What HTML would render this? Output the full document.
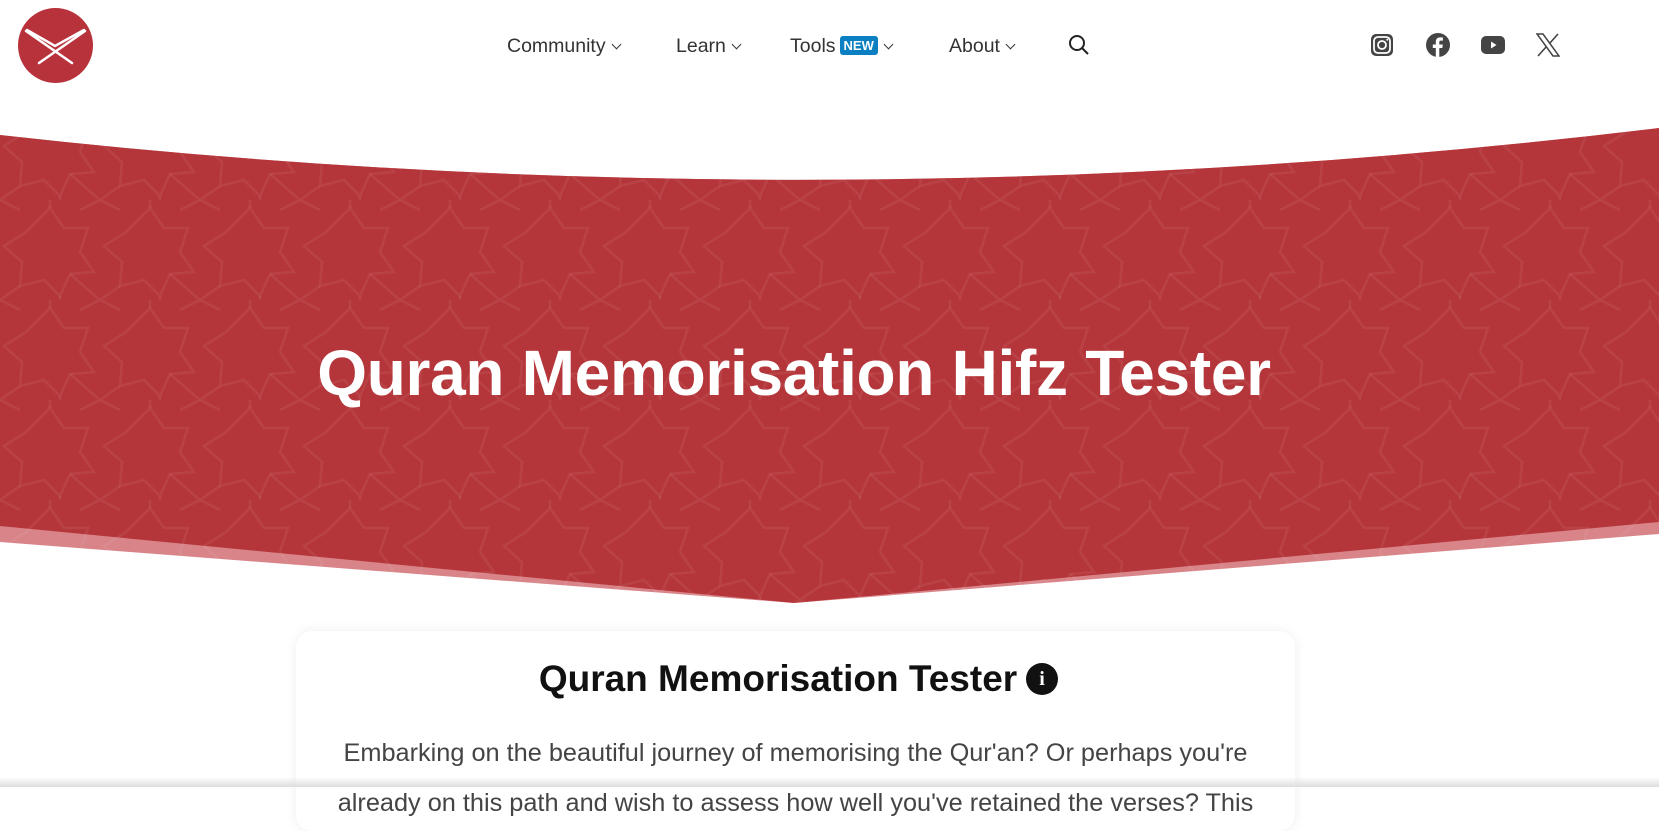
<!DOCTYPE html>
<html><head><meta charset="utf-8"><style>
*{margin:0;padding:0;box-sizing:border-box}
body{width:1659px;height:787px;overflow:hidden;background:#fff;font-family:"Liberation Sans",sans-serif;position:relative}
.nav a{position:absolute;top:35px;font-size:19.5px;color:#333;text-decoration:none}
.chev{display:inline-block;width:7px;height:7px;border-right:1.6px solid #333;border-bottom:1.6px solid #333;transform:rotate(45deg);margin-left:7px;position:relative;top:-4px}
.new{background:#0a7fc2;color:#fff;font-size:13px;font-weight:bold;padding:2px 4px;border-radius:3px;position:relative;top:-2px;margin-left:4px}
h1{position:absolute;top:336px;left:0;width:1588px;text-align:center;color:#fff;font-size:64px;font-weight:900;letter-spacing:-0.3px}
.card{position:absolute;left:296px;top:631px;width:999px;height:200px;background:#fff;border-radius:16px;box-shadow:0 0 12px rgba(0,0,0,.07)}
h2{position:absolute;top:658px;left:0;width:1556px;text-align:center;font-size:37px;font-weight:bold;color:#111}
.info{position:absolute;left:1026px;top:663px;width:32px;height:32px;border-radius:50%;background:#111;color:#fff;text-align:center;font:bold 20px/32px "Liberation Serif",serif}
p{position:absolute;left:286px;width:1019px;text-align:center;font-size:25.3px;color:#444;top:728px;line-height:50px}
.fade{position:absolute;left:0;bottom:0;width:1659px;height:10px;background:linear-gradient(#fff0,#ddd)}
</style></head><body>
<svg style="position:absolute;left:18px;top:8px" width="75" height="75" viewBox="0 0 75 75"><circle cx="37.5" cy="37.5" r="37.5" fill="#b8323b"/><path d="M8 23 L54 55 M67 23 L21 55 M9 22 L37 38 L66 22" stroke="#fff" stroke-width="2.5" fill="none" stroke-linecap="round"/></svg>
<div class="nav">
<a style="left:507px">Community<span class="chev"></span></a>
<a style="left:676px">Learn<span class="chev"></span></a>
<a style="left:790px">Tools<span class="new">NEW</span><span class="chev"></span></a>
<a style="left:949px">About<span class="chev"></span></a>
</div>
<svg style="position:absolute;left:1068px;top:34px" width="22" height="22" viewBox="0 0 22 22"><circle cx="9" cy="9" r="7" stroke="#222" stroke-width="2" fill="none"/><path d="M14 14l6 6" stroke="#222" stroke-width="2"/></svg>
<svg style="position:absolute;left:1370px;top:33px" width="24" height="24" viewBox="0 0 24 24"><rect x="1" y="1" width="22" height="22" rx="5" fill="#444"/><rect x="4" y="4" width="16" height="16" rx="4" fill="none" stroke="#fff" stroke-width="1.8"/><circle cx="12" cy="12" r="4" fill="none" stroke="#fff" stroke-width="1.8"/><circle cx="17.3" cy="6.7" r="1" fill="#fff"/></svg>
<svg style="position:absolute;left:1426px;top:33px" width="24" height="24" viewBox="0 0 24 24"><circle cx="12" cy="12" r="12" fill="#444"/><path d="M13.3 24V15h3l.5-3.5h-3.5V9.3c0-1 .3-1.7 1.8-1.7h1.8V4.5c-.3 0-1.4-.1-2.7-.1-2.7 0-4.4 1.6-4.4 4.6v2.5H6.8V15h3v9z" fill="#fff"/></svg>
<svg style="position:absolute;left:1481px;top:33px" width="24" height="24" viewBox="0 0 24 24"><rect x="0" y="3" width="24" height="18" rx="5" fill="#444"/><path d="M10 8.5v7l5.5-3.5z" fill="#fff"/></svg>
<svg style="position:absolute;left:1536px;top:33px" width="24" height="24" viewBox="0 0 24 24"><path d="M1 1h6l16 22h-6z" fill="none" stroke="#444" stroke-width="1.5"/><path d="M22 1L13.5 10.5M2 23l8.6-9.6" stroke="#444" stroke-width="1.6"/></svg>
<svg style="position:absolute;left:0;top:0" width="1659" height="787">
<defs><pattern id="p" width="100" height="100" patternUnits="userSpaceOnUse">
<g fill="none" stroke="#ffffff" stroke-opacity=".06" stroke-width="2.5">
<path d="M50 8 L64 28 L88 28 L80 52 L94 72 L70 74 L60 96 L44 80 L20 86 L22 62 L4 46 L26 32 Z"/>
<path d="M0 0 L20 10 M100 0 L80 10 M0 100 L20 86 M100 100 L70 74 M50 8 L50 0 M60 96 L60 100"/>
</g></pattern></defs>
<path d="M0 135 Q830 228 1659 128 L1659 534 L794 603 L0 542 Z" fill="#d88488"/>
<path d="M0 135 Q830 228 1659 128 L1659 522 L794 603 L0 526 Z" fill="#b5363a"/>
<path d="M0 135 Q830 228 1659 128 L1659 534 L794 603 L0 542 Z" fill="url(#p)"/>
</svg>
<h1>Quran Memorisation Hifz Tester</h1>
<div class="card"></div>
<h2>Quran Memorisation Tester</h2>
<div class="info">i</div>
<p>Embarking on the beautiful journey of memorising the Qur'an? Or perhaps you're<br>already on this path and wish to assess how well you've retained the verses? This</p>
<div class="fade"></div>
</body></html>
